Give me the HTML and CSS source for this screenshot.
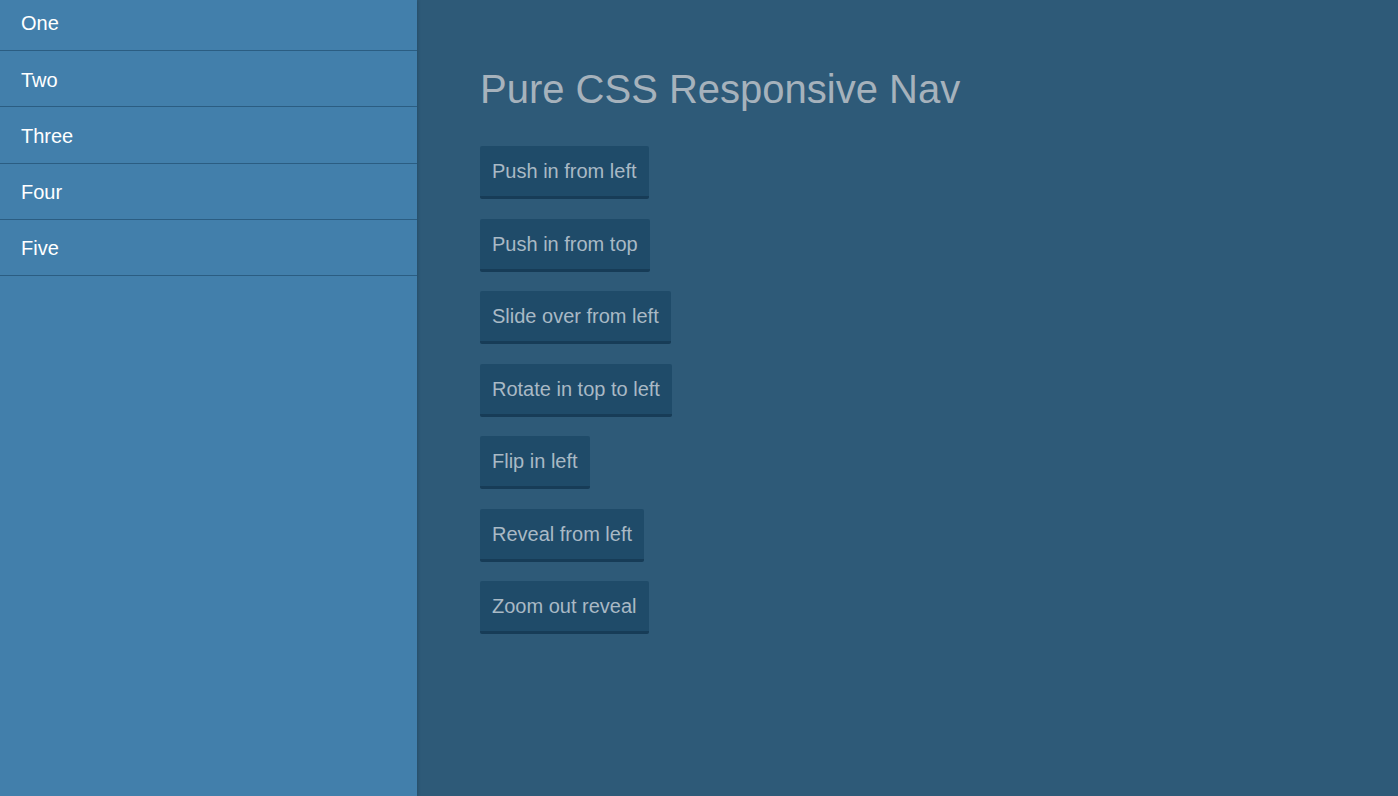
FILE: index.html
```html
<!DOCTYPE html>
<html lang="en">

<head>
    <meta charset="UTF-8">
    <meta name="viewport" content="width=device-width, initial-scale=1.0">
    <title>Pure CSS Responsive Nav</title>
    <link rel="stylesheet" href="styles.css">
</head>

<body>
    <nav class="side-nav">
        <a href="#">One</a>
        <a href="#">Two</a>
        <a href="#">Three</a>
        <a href="#">Four</a>
        <a href="#">Five</a>
    </nav>
    <main class="content">
        <h1>Pure CSS Responsive Nav</h1>
        <div class="buttons">
            <button class="effect-btn">Push in from left</button>
            <button class="effect-btn">Push in from top</button>
            <button class="effect-btn">Slide over from left</button>
            <button class="effect-btn">Rotate in top to left</button>
            <button class="effect-btn">Flip in left</button>
            <button class="effect-btn">Reveal from left</button>
            <button class="effect-btn">Zoom out reveal</button>
        </div>
    </main>
</body>

</html>
```

FILE: styles.css
```css
html, body {
    height: 100%;
}

body {
    font-family: "Liberation Sans", Arial, sans-serif;
    background-color: #2e5a78;
    margin: 0;
    padding: 0;
    display: flex;
}

.side-nav {
    width: 417px;
    flex-shrink: 0;
    background: #427fab;
    box-shadow: 1px 0 3px rgba(0, 0, 0, 0.15);
    display: flex;
    flex-direction: column;
}

.side-nav a {
    display: block;
    color: white;
    text-decoration: none;
    font-size: 20px;
    padding: 17.5px 21px 15.75px;
    line-height: 22px;
    border-bottom: 1px solid #2b5d82;
}

.side-nav a:first-child {
    padding-top: 12px;
    padding-bottom: 16px;
}

.content {
    flex: 1;
    padding: 0 63px;
}

.content h1 {
    font-weight: normal;
    font-size: 40px;
    color: #a6b2bc;
    margin: 65px 0 33px;
    line-height: 48px;
}

.buttons {
    display: flex;
    flex-direction: column;
    align-items: flex-start;
    gap: 19.5px;
}

.effect-btn {
    font-family: inherit;
    font-size: 20px;
    line-height: 22px;
    color: #a9b9c5;
    background: #1f4b69;
    border: none;
    border-bottom: 3px solid #173c57;
    border-radius: 2px;
    padding: 14px 12px;
    cursor: pointer;
}
```
